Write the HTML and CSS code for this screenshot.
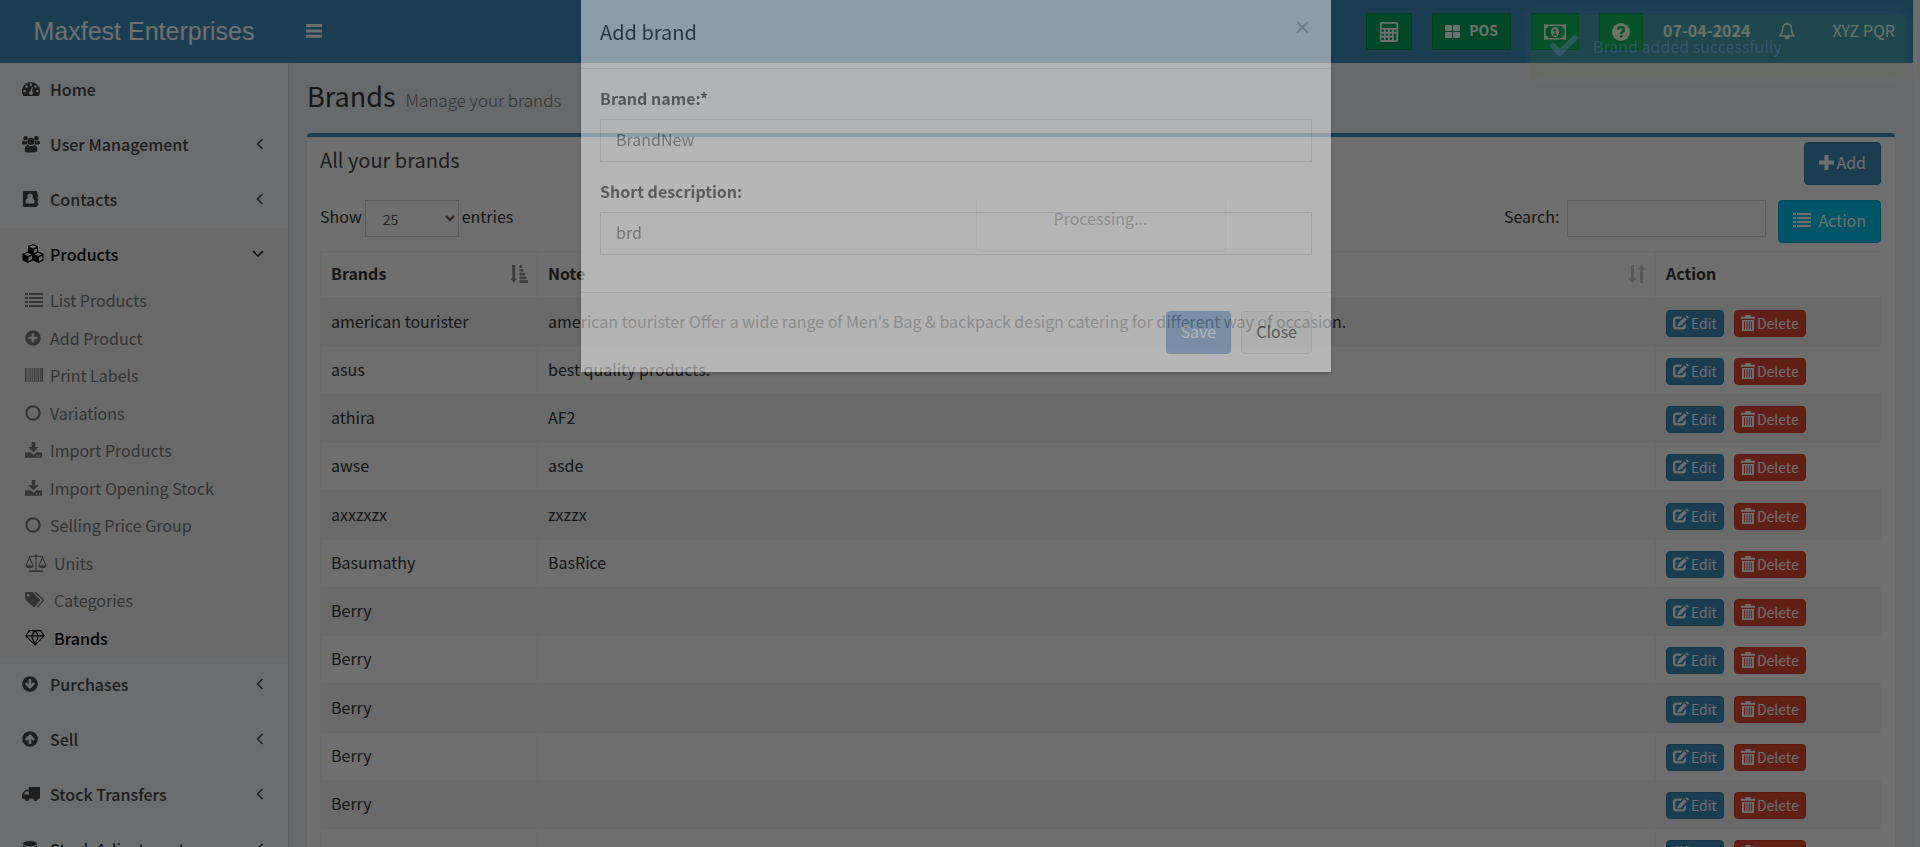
FILE: index.html
```html
<!DOCTYPE html>
<html lang="en">
<head>
<meta charset="utf-8">
<title>Brands - Maxfest Enterprises</title>
<link rel="stylesheet" href="styles.css">
</head>
<body>
<svg class="sprite" aria-hidden="true">
  <symbol id="bars" viewBox="0 0 16 14"><path d="M0 0h16v3H0zM0 5.4h16v3H0zM0 10.8h16v3H0z"/></symbol>
  <symbol id="dash" viewBox="0 0 18 18"><path fill-rule="evenodd" d="M9 2a9 9 0 0 1 9 9c0 1.800-.5 3.400-1.300 4.700-.2.200-.4.300-.7.300H2c-.3 0-.5-.1-.7-.3A9 9 0 0 1 9 2zM2.600 9.700a1.300 1.300 0 1 0 0 2.600 1.300 1.300 0 0 0 0-2.600zM4.500 5.200a1.300 1.300 0 1 0 0 2.600 1.300 1.300 0 0 0 0-2.600zM9 3.300a1.300 1.300 0 1 0 0 2.600 1.300 1.300 0 0 0 0-2.600zM13.500 5.200a1.300 1.300 0 1 0 0 2.600 1.300 1.300 0 0 0 0-2.600zM15.400 9.700a1.300 1.300 0 1 0 0 2.600 1.300 1.300 0 0 0 0-2.600zM9.700 6.900l-1 4a2 2 0 1 0 1.300.3l1-4z"/></symbol>
  <symbol id="users" viewBox="0 0 20 20"><circle cx="4" cy="3.500" r="2.500"/><circle cx="16" cy="3.500" r="2.500"/><circle cx="10" cy="7" r="4"/><path d="M2 6.500c1 .8 2.500.8 3.500.3 0 1.800.3 2.800 1 3.700H2C.7 10.500 0 9.800 0 8.700c0-1.500.8-2.500 2-2.200zM18 6.500c-1 .8-2.500.8-3.500.3 0 1.800-.3 2.800-1 3.700H18c1.300 0 2-.7 2-1.800 0-1.500-.8-2.500-2-2.200zM6.300 11c2 1.800 5.400 1.800 7.400 0 2.300.2 3.300 2.500 3.300 5.500 0 2-1.300 3-3 3H6c-1.700 0-3-1-3-3 0-3 1-5.300 3.300-5.500z"/></symbol>
  <symbol id="book" viewBox="0 0 18 20"><path fill-rule="evenodd" d="M2 1h12.500c.9 0 1.500.6 1.500 1.500V5h1v3h-1v1.500h1v3h-1V14h1v3h-1v.5c0 .9-.6 1.500-1.500 1.500H2c-1.200 0-2-.8-2-2V3c0-1.200.8-2 2-2zm6 3a3 3 0 0 0-2.400 4.900C3.900 9.400 3 11 3 13.200c0 1.100.7 1.800 1.700 1.800h6.600c1 0 1.700-.7 1.700-1.800 0-2.200-.9-3.800-2.600-4.300A3 3 0 0 0 8 4z"/></symbol>
  <symbol id="cubes" viewBox="0 0 22 20"><path fill-rule="evenodd" d="M11 0l5 2.100v5.300l5.500 2.300v6.500L16.300 19 11 16.600 5.700 19 .5 16.300V9.700L6 7.400V2.100zM11 1.300L7.300 2.900 11 4.500l3.700-1.600zM11.700 5.800v3.300l3.300-1.400V4.400zM5.700 8.700L2 10.300l3.700 1.700 3.700-1.700zM6.400 13.300v3.900l3.700-1.900v-3.600zM16.300 8.700l-3.700 1.600 3.700 1.700 3.700-1.700zM17 13.300v3.900l3.500-1.900v-3.600z"/></symbol>
  <symbol id="list" viewBox="0 0 18 14"><path d="M0 0h3v2H0zM4 0h14v2H4zM0 4h3v2H0zM4 4h14v2H4zM0 8h3v2H0zM4 8h14v2H4zM0 12h3v2H0zM4 12h14v2H4z"/></symbol>
  <symbol id="plusc" viewBox="0 0 16 16"><path fill-rule="evenodd" d="M8 .2a7.800 7.800 0 1 1 0 15.600A7.800 7.800 0 0 1 8 .2zM6.700 3.500v3.200H3.500v2.600h3.200v3.200h2.600V9.300h3.200V6.700H9.300V3.500z"/></symbol>
  <symbol id="barcode" viewBox="0 0 18 14"><path d="M0 0h1v14H0zM1.600 0h.7v14h-.7zM3.500 0h.8v14h-.8zM5 0h.8v14H5zM6.800 0h1v14h-1zM9 0h1.300v14H9zM11.200 0h.7v14h-.7zM12.800 0h1.400v14h-1.400zM15 0h.7v14H15zM16.500 0h1.500v14h-1.500z"/></symbol>
  <symbol id="circle" viewBox="0 0 16 16"><circle cx="8" cy="8" r="6.700" fill="none" stroke="currentColor" stroke-width="2.100"/></symbol>
  <symbol id="download" viewBox="0 0 17 16"><path d="M6.700 0h3.600v5h3.500L8.500 10.200 3.200 5h3.500z"/><path fill-rule="evenodd" d="M0 11c0-.4.300-.7.700-.7h4.800l3 2.600 3-2.600h4.800c.4 0 .7.300.7.700v4c0 .4-.3.700-.7.700H.7c-.4 0-.7-.3-.7-.7zm11.200 2.300v1.200h1.200v-1.200zm2.700 0v1.200h1.200v-1.200z"/></symbol>
  <symbol id="scale" viewBox="0 0 22 18"><path fill="none" stroke="currentColor" stroke-width="1.100" d="M4 2.200h14M11 1v15.500M1 11.500l3.500-8 3.500 8M14 11.500l3.500-8 3.500 8"/><circle cx="11" cy="2" r="1.600"/><path d="M.3 11.300h8.400c0 2-2 3-4.200 3s-4.200-1-4.200-3zM13.300 11.300h8.400c0 2-2 3-4.200 3s-4.200-1-4.200-3zM4 16.300h14V18H4z"/></symbol>
  <symbol id="tags" viewBox="0 0 20 16"><path fill-rule="evenodd" d="M0 1.300C0 .6.600 0 1.300 0h4.900c.7 0 1.600.4 2.100.9l6.400 6.400c.5.500.5 1.300 0 1.800l-5 5.600c-.5.500-1.300.5-1.800 0L.9 8.300C.4 7.800 0 6.900 0 6.200zm3.200.6a1.400 1.400 0 1 0 0 2.800 1.400 1.400 0 0 0 0-2.800z"/><path d="M8.600 0h1.600c.7 0 1.600.4 2.100.9l6.400 6.400c.5.500.5 1.300 0 1.800l-5.300 5.900c-.6.600-1.200.6-1.800.2l5.400-6.100c.5-.5.500-1.300 0-1.800z"/></symbol>
  <symbol id="diamond" viewBox="0 0 21 17"><path fill="none" stroke="currentColor" stroke-width="1.200" stroke-linejoin="round" d="M4.500.8h12L20 6.300 10.500 16 1 6.300zM1 6.300h19M10.500.8L6.800 6.300l3.700 9.500 3.700-9.500z"/></symbol>
  <symbol id="down" viewBox="0 0 16 16"><path fill-rule="evenodd" d="M8 .2a7.800 7.800 0 1 1 0 15.600A7.800 7.800 0 0 1 8 .2zM6.700 3v5.200L4.600 6.100 2.800 7.900 8 13.100l5.200-5.200-1.800-1.800-2.100 2.100V3z"/></symbol>
  <symbol id="up" viewBox="0 0 16 16"><path fill-rule="evenodd" d="M8 .2a7.800 7.800 0 1 1 0 15.600A7.800 7.800 0 0 1 8 .2zM6.700 13V7.800L4.600 9.900 2.800 8.100 8 2.900l5.200 5.200-1.800 1.800-2.100-2.100V13z"/></symbol>
  <symbol id="truck" viewBox="0 0 18 15"><path fill-rule="evenodd" d="M7.500.5h9.800c.4 0 .7.300.7.700v10.300c0 .5-.4.700-1 .7h-1a2.300 2.300 0 0 1-4.600 0H7.300a2.300 2.300 0 0 1-4.600 0H1c-.6 0-1-.2-1-.7V7.500l3.200-3.800c.3-.3.600-.4 1-.4h2.600V1.200c0-.4.300-.7.700-.7zM4.400 4.700L1.600 8h5.200V4.700z"/><circle cx="5" cy="12.600" r="1.600"/><circle cx="13.700" cy="12.600" r="1.600"/></symbol>
  <symbol id="db" viewBox="0 0 16 18"><ellipse cx="8" cy="3" rx="7.800" ry="3"/><path d="M.2 5c3 2.600 12.600 2.600 15.600 0v3c-2 3.500-13.600 3.500-15.600 0zM.2 10c3 2.600 12.600 2.600 15.600 0v4c-2 4-13.600 4-15.600 0z"/></symbol>
  <symbol id="left" viewBox="0 0 8 12"><path fill="none" stroke="currentColor" stroke-width="1.500" d="M6.500 1l-5 5 5 5"/></symbol>
  <symbol id="ang" viewBox="0 0 12 8"><path fill="none" stroke="currentColor" stroke-width="1.500" d="M1 1l5 5 5-5"/></symbol>
  <symbol id="calc" viewBox="0 0 20 22"><path fill-rule="evenodd" d="M2 0h16c1.100 0 2 .9 2 2v18c0 1.100-.9 2-2 2H2c-1.100 0-2-.9-2-2V2C0 .9.900 0 2 0zm0 2v4.500h16V2zM1.800 8.500v2.300h2.600V8.500zm4.500 0v2.300h2.600V8.500zm4.600 0v2.300h2.600V8.500zm4.500 0v2.300H18V8.500zM1.800 12.800v2.300h2.600v-2.300zm4.500 0v2.300h2.600v-2.300zm4.600 0v2.300h2.600v-2.300zM1.800 17.200v2.600h2.600v-2.600zm4.500 0v2.600h2.600v-2.600zm4.600 0v2.600h2.600v-2.600zm4.500-4.400v7H18v-7z"/></symbol>
  <symbol id="th" viewBox="0 0 15 13"><rect width="7" height="6" rx="1"/><rect x="8" width="7" height="6" rx="1"/><rect y="7" width="7" height="6" rx="1"/><rect x="8" y="7" width="7" height="6" rx="1"/></symbol>
  <symbol id="money" viewBox="0 0 22 15"><path fill-rule="evenodd" d="M0 0h22v15H0zM4 1.500A2.500 2.500 0 0 1 1.500 4v7A2.500 2.500 0 0 1 4 13.500h14a2.500 2.500 0 0 1 2.500-2.500V4A2.500 2.500 0 0 1 18 1.500zM11 2.500c2.200 0 4 2.200 4 5s-1.800 5-4 5-4-2.200-4-5 1.800-5 4-5zm-.6 2L8.800 6l.8.900.8-.6v3.200H9V11h4V9.500h-1.200v-5z"/></symbol>
  <symbol id="help" viewBox="0 0 18 18"><circle cx="9" cy="9" r="9"/><path fill="none" stroke="#00a65a" stroke-width="2.500" d="M5.800 6.700C6.300 5 7.500 4.300 9 4.300c1.700 0 3 .9 3 2.400 0 2-2.900 2-2.900 4.300"/><path fill="#00a65a" d="M7.800 12.200h2.600v2.400H7.800z"/></symbol>
  <symbol id="bell" viewBox="0 0 18 20"><path fill="none" stroke="currentColor" stroke-width="1.500" stroke-linejoin="round" d="M9 2.200c-3.200 0-4.800 2.400-4.800 5C4.200 11.500 2.800 13.600 1 15.500h16c-1.800-1.900-3.200-4-3.200-8.300 0-2.600-1.600-5-4.800-5z"/><path d="M8 .5h2v2H8zM6.500 16h5c0 2-1 3.300-2.500 3.300S6.500 18 6.500 16z"/></symbol>
  <symbol id="plus" viewBox="0 0 15 15"><path d="M5.500 0h4v5.500H15v4H9.500V15h-4V9.500H0v-4h5.500z"/></symbol>
  <symbol id="check" viewBox="0 0 30 23"><path d="M0 12l4-4 7 6.500L26 0l4 4-19 19z"/></symbol>
  <symbol id="edit" viewBox="0 0 16 15"><path d="M9.500 1H3.500A3.500 3.500 0 0 0 0 4.500v6A3.500 3.500 0 0 0 3.500 14h6a3.500 3.500 0 0 0 3.500-3.500V8l-2.300 2v.3c0 .9-.7 1.400-1.500 1.400H3.800c-.9 0-1.500-.7-1.500-1.500V4.800c0-.9.700-1.500 1.500-1.500h4zM11.500 1.700l2.400 2.300-6 6-3.600 1.200 1.200-3.600zM13.800 0L16 1.800l-1.300 1.300-2.200-2z"/></symbol>
  <symbol id="trash" viewBox="0 0 14 16"><path fill-rule="evenodd" d="M4.500 0h5v1.800H14v2H0v-2h4.500zM1 5h12v10c0 .6-.4 1-1 1H2c-.6 0-1-.4-1-1zm2 1.300v8h1v-8zm2.400 0v8h1v-8zm2.400 0v8h1v-8zm2.300 0v8h1v-8z"/></symbol>
  <symbol id="asc" viewBox="0 0 18 18"><path d="M2.200 0h3v13.500H7L3.700 18 .5 13.500h1.700zM9.500 0H12v2.800H9.500zM9.500 4h4v2.600h-4zM9.500 7.800H15v2.600H9.500zM9.500 11.600h7v2.600h-7zM9.500 15.300H18V18H9.500z"/></symbol>
  <symbol id="both" viewBox="0 0 18 18"><path d="M3 0h3v13h2.500l-4 5L.3 13H3zM12 18h3V5h2.700L13.500 0l-4 5H12z"/></symbol>
</svg>

<div class="app">
  <header class="topbar">
    <a class="brand" href="#">Maxfest Enterprises</a>
    <button class="toggle" aria-label="Toggle navigation"><svg class="w16"><use href="#bars"/></svg></button>
    <nav class="tools">
      <button class="tool" aria-label="Calculator"><svg class="w20"><use href="#calc"/></svg></button>
      <a class="tool pos" href="#"><svg class="w15"><use href="#th"/></svg><strong>POS</strong></a>
      <button class="tool" aria-label="Register profit"><svg class="w22"><use href="#money"/></svg></button>
      <button class="tool" aria-label="Help"><svg class="w18"><use href="#help"/></svg></button>
      <strong class="date">07-04-2024</strong>
      <a class="bell" href="#" aria-label="Notifications"><svg class="w18"><use href="#bell"/></svg></a>
      <a class="user" href="#">XYZ PQR</a>
    </nav>
  </header>

  <aside class="sidebar">
    <ul class="menu">
      <li><a href="#"><svg class="w18"><use href="#dash"/></svg>Home</a></li>
      <li><a href="#"><svg class="w18"><use href="#users"/></svg>User Management<svg class="arrow"><use href="#left"/></svg></a></li>
      <li><a href="#"><svg class="w18"><use href="#book"/></svg>Contacts<svg class="arrow"><use href="#left"/></svg></a></li>
      <li class="open"><a href="#"><svg class="w22"><use href="#cubes"/></svg>Products<svg class="arrow wide"><use href="#ang"/></svg></a>
        <ul class="sub">
          <li><a href="#"><svg class="w18"><use href="#list"/></svg>List Products</a></li>
          <li><a href="#"><svg class="w16"><use href="#plusc"/></svg>Add Product</a></li>
          <li><a href="#"><svg class="w18"><use href="#barcode"/></svg>Print Labels</a></li>
          <li><a href="#"><svg class="w16"><use href="#circle"/></svg>Variations</a></li>
          <li><a href="#"><svg class="w17"><use href="#download"/></svg>Import Products</a></li>
          <li><a href="#"><svg class="w17"><use href="#download"/></svg>Import Opening Stock</a></li>
          <li><a href="#"><svg class="w16"><use href="#circle"/></svg>Selling Price Group</a></li>
          <li class="far"><a href="#"><svg class="w22"><use href="#scale"/></svg>Units</a></li>
          <li class="far"><a href="#"><svg class="w20"><use href="#tags"/></svg>Categories</a></li>
          <li class="far current"><a href="#"><svg class="w20"><use href="#diamond"/></svg>Brands</a></li>
        </ul>
      </li>
      <li><a href="#"><svg class="w16"><use href="#down"/></svg>Purchases<svg class="arrow"><use href="#left"/></svg></a></li>
      <li><a href="#"><svg class="w16"><use href="#up"/></svg>Sell<svg class="arrow"><use href="#left"/></svg></a></li>
      <li><a href="#"><svg class="w18"><use href="#truck"/></svg>Stock Transfers<svg class="arrow"><use href="#left"/></svg></a></li>
      <li><a href="#"><svg class="w16"><use href="#db"/></svg>Stock Adjustment<svg class="arrow"><use href="#left"/></svg></a></li>
    </ul>
  </aside>

  <main class="content">
    <h1 class="page-title">Brands <small>Manage your brands</small></h1>
    <section class="box">
      <div class="box-head">
        <h2>All your brands</h2>
        <button class="btn primary"><svg class="w15"><use href="#plus"/></svg>Add</button>
      </div>
      <div class="toolbar">
        <label class="length">Show <select><option>25</option></select> entries</label>
        <label class="search">Search: <input type="search"></label>
        <button class="btn info"><svg class="w18"><use href="#list"/></svg>Action</button>
        <div class="processing">Processing...</div>
      </div>
      <table class="grid">
        <thead><tr><th class="c-brand">Brands<svg class="sort on"><use href="#asc"/></svg></th><th>Note<svg class="sort"><use href="#both"/></svg></th><th class="c-act">Action</th></tr></thead>
        <tbody>
          <tr><td>american tourister</td><td>american tourister Offer a wide range of Men's Bag &amp; backpack design catering for different way of occasion.</td><td><div class="acts"><button class="xs primary"><svg class="w16"><use href="#edit"/></svg>Edit</button><button class="xs danger"><svg class="w14"><use href="#trash"/></svg>Delete</button></div></td></tr>
          <tr><td>asus</td><td>best quality products.</td><td><div class="acts"><button class="xs primary"><svg class="w16"><use href="#edit"/></svg>Edit</button><button class="xs danger"><svg class="w14"><use href="#trash"/></svg>Delete</button></div></td></tr>
          <tr><td>athira</td><td>AF2</td><td><div class="acts"><button class="xs primary"><svg class="w16"><use href="#edit"/></svg>Edit</button><button class="xs danger"><svg class="w14"><use href="#trash"/></svg>Delete</button></div></td></tr>
          <tr><td>awse</td><td>asde</td><td><div class="acts"><button class="xs primary"><svg class="w16"><use href="#edit"/></svg>Edit</button><button class="xs danger"><svg class="w14"><use href="#trash"/></svg>Delete</button></div></td></tr>
          <tr><td>axxzxzx</td><td>zxzzx</td><td><div class="acts"><button class="xs primary"><svg class="w16"><use href="#edit"/></svg>Edit</button><button class="xs danger"><svg class="w14"><use href="#trash"/></svg>Delete</button></div></td></tr>
          <tr><td>Basumathy</td><td>BasRice</td><td><div class="acts"><button class="xs primary"><svg class="w16"><use href="#edit"/></svg>Edit</button><button class="xs danger"><svg class="w14"><use href="#trash"/></svg>Delete</button></div></td></tr>
          <tr><td>Berry</td><td></td><td><div class="acts"><button class="xs primary"><svg class="w16"><use href="#edit"/></svg>Edit</button><button class="xs danger"><svg class="w14"><use href="#trash"/></svg>Delete</button></div></td></tr>
          <tr><td>Berry</td><td></td><td><div class="acts"><button class="xs primary"><svg class="w16"><use href="#edit"/></svg>Edit</button><button class="xs danger"><svg class="w14"><use href="#trash"/></svg>Delete</button></div></td></tr>
          <tr><td>Berry</td><td></td><td><div class="acts"><button class="xs primary"><svg class="w16"><use href="#edit"/></svg>Edit</button><button class="xs danger"><svg class="w14"><use href="#trash"/></svg>Delete</button></div></td></tr>
          <tr><td>Berry</td><td></td><td><div class="acts"><button class="xs primary"><svg class="w16"><use href="#edit"/></svg>Edit</button><button class="xs danger"><svg class="w14"><use href="#trash"/></svg>Delete</button></div></td></tr>
          <tr><td>Berry</td><td></td><td><div class="acts"><button class="xs primary"><svg class="w16"><use href="#edit"/></svg>Edit</button><button class="xs danger"><svg class="w14"><use href="#trash"/></svg>Delete</button></div></td></tr>
          <tr><td></td><td></td><td><div class="acts"><button class="xs primary"><svg class="w16"><use href="#edit"/></svg>Edit</button><button class="xs danger"><svg class="w14"><use href="#trash"/></svg>Delete</button></div></td></tr>
        </tbody>
      </table>
    </section>
  </main>
</div>

<div class="backdrop"></div>

<div class="modal-wrap">
  <form class="modal">
    <div class="modal-head"><h2>Add brand</h2><button type="button" class="close" aria-label="Dismiss">×</button></div>
    <div class="modal-body">
      <div class="field"><label for="name">Brand name:*</label><input id="name" type="text" value="BrandNew"></div>
      <div class="field"><label for="desc">Short description:</label><input id="desc" type="text" value="brd"></div>
    </div>
    <div class="modal-foot"><button type="button" class="btn save">Save</button><button type="button" class="btn plain">Close</button></div>
  </form>
</div>

<div class="toast" role="status"><svg class="tick"><use href="#check"/></svg>Brand added successfully</div>
</body>
</html>
```
FILE: styles.css
```css
* { box-sizing: border-box; }
html { background: #f9f9f9; }
body {
  margin: 0;
  height: 100vh;
  overflow: hidden;
  padding-right: 7px;
  font: 16px/24px "Noto Sans CJK SC", "Noto Sans", sans-serif;
  color: #333;
}
button, input, select { font: inherit; color: inherit; }
button { cursor: pointer; }
a { color: inherit; text-decoration: none; }
h1, h2 { margin: 0; font-weight: 400; }
ul { margin: 0; padding: 0; list-style: none; }
svg { fill: currentColor; flex: none; }
.sprite { display: none; }
.w14 { width: 14px; height: 16px; }
.w15 { width: 15px; height: 15px; }
.w16 { width: 16px; height: 16px; }
.w17 { width: 17px; height: 16px; }
.w18 { width: 18px; height: 18px; }
.w20 { width: 20px; height: 20px; }
.w22 { width: 22px; height: 18px; }

.app {
  display: grid;
  grid-template: 63px auto / 289px minmax(0, 1fr);
  min-height: 100vh;
  background: #ecf0f5;
}

.topbar {
  grid-column: 1 / 3;
  display: flex;
  align-items: center;
  padding-right: 18px;
  background: #3c8dbc;
  color: #fff;
}
.brand {
  width: 288px;
  text-align: center;
  font: 25px/63px "Liberation Sans", Arial, sans-serif;
}
.toggle {
  display: flex;
  border: 0;
  padding: 16px 18px 18px;
  background: none;
}
.tools {
  display: flex;
  align-items: center;
  gap: 20px;
  margin-left: auto;
}
.tool {
  display: flex;
  align-items: center;
  gap: 9px;
  height: 37px;
  padding: 0 12px;
  border: 1px solid #008d4c;
  background: #00a65a;
  font-size: 14px;
}
.tool strong, .date, .user { padding-bottom: 3px; }
.bell { display: flex; margin: 0 16px 0 8px; padding-bottom: 2px; }

.sidebar {
  border-right: 1px solid #d2d6de;
  background: #f9fafc;
}
.menu > li > a {
  display: flex;
  align-items: center;
  height: 55px;
  padding: 0 24px 3px 22px;
  font-weight: 500;
  color: #444;
}
.menu > li > a > svg:first-child { margin-right: 10px; }
.menu > li > a > .w16:first-child { margin-right: 12px; }
.menu > li > a > .w22:first-child { margin-right: 6px; height: 20px; }
.menu .arrow { width: 8px; height: 12px; margin-left: auto; }
.menu .wide { width: 12px; height: 8px; }
.menu > .open { background: #f4f4f5; }
.menu > .open > a { color: #000; }
.sub {
  display: grid;
  grid-auto-rows: 1fr;
  height: 375px;
}
.sub a {
  display: flex;
  align-items: center;
  height: 100%;
  padding: 0 0 3px 25px;
  color: #777;
}
.sub svg { margin-right: 7px; }
.sub .w16 { margin-right: 9px; }
.sub .w17 { margin-right: 8px; }
.sub .far .w20 { margin-right: 9px; }
.sub .current a { color: #000; font-weight: 500; }

.content { padding: 0 18px; }
.page-title {
  height: 70px;
  padding-top: 13px;
  font-size: 27px;
  line-height: 40px;
}
.page-title small { font-size: 17px; font-weight: 300; color: #777; margin-left: 4px; }
.box {
  border-top: 4px solid #3c8dbc;
  border-radius: 4px;
  padding: 5px 14px 0 13px;
  background: #fff;
  box-shadow: 0 1px 1px rgba(0, 0, 0, .1);
}
.box-head { display: flex; justify-content: space-between; }
.box-head h2 { font-size: 20px; line-height: 35px; color: #444; }
.btn {
  display: flex;
  align-items: center;
  height: 43px;
  padding: 0 14px 3px;
  border: 1px solid transparent;
  border-radius: 4px;
}
.primary { background: #3c8dbc; border-color: #367fa9; color: #fff; }
.primary.btn { gap: 2px; }
.info { background: #00c0ef; border-color: #00acd6; color: #fff; gap: 7px; }
.danger { background: #dd4b39; border-color: #d73925; color: #fff; }
.toolbar {
  position: relative;
  display: flex;
  align-items: flex-start;
  gap: 12px;
  margin-top: 15px;
}
.toolbar label { display: flex; height: 37px; line-height: 33px; }
.length { gap: 3px; }
.search { gap: 8px; margin-left: auto; }
.toolbar select, .toolbar input {
  height: 37px;
  border: 1px solid #d2d6de;
  background: #fff;
}
.toolbar select { width: 94px; padding-left: 13px; font-size: 14px; color: #555; }
.toolbar input { width: 199px; }
.processing {
  position: absolute;
  left: 50%;
  top: 0;
  width: 250px;
  height: 51px;
  margin-left: -125px;
  border: solid #ddd;
  border-width: 0 1px 1px;
  border-radius: 0 0 4px 4px;
  background: #fff;
  box-shadow: 0 1px 1px rgba(0, 0, 0, .05);
  text-align: center;
  line-height: 36px;
}

.grid {
  width: 100%;
  margin-top: 8px;
  border-spacing: 0;
  border: 1px solid #f4f4f4;
  border-width: 1px 0 0 1px;
  table-layout: fixed;
}
.grid th, .grid td { padding: 0 10px 3px; border: 0 solid #f4f4f4; border-width: 0 0 1px; text-align: left; }
.grid th { position: relative; height: 46px; }
.grid th + th, .grid td + td { border-left-width: 1px; }
.grid td { height: 48px; }
.grid tr:nth-child(odd) td { background: #f4f4f4; }
.grid tr:nth-child(4n+1) td { height: 49px; }
.grid td { color: #333; white-space: nowrap; }
.c-brand { width: 216px; }
.c-act { width: 226px; }
.sort { position: absolute; right: 9px; top: 13px; width: 18px; height: 18px; opacity: .25; }
.sort.on { opacity: .55; }
.acts { display: flex; gap: 10px; padding-top: 5px; }
.xs {
  display: flex;
  align-items: center;
  gap: 2px;
  height: 27px;
  padding: 0 6px 1px;
  border: 1px solid #367fa9;
  border-radius: 4px;
  font-size: 14px;
}
.xs.danger { border-color: #d73925; }

.backdrop { position: fixed; inset: 0; background: rgba(0, 0, 0, .565); }
.modal-wrap {
  position: fixed;
  inset: 0 8px auto 0;
  display: flex;
  justify-content: center;
}
.modal {
  width: 750px;
  background: #fff;
  opacity: .5;
  box-shadow: 0 2px 4px rgba(0, 0, 0, .4);
}
.modal-head {
  display: flex;
  justify-content: space-between;
  height: 69px;
  padding: 0 19px;
  border-bottom: 1px solid #e5e5e5;
}
.modal-head h2 { font-size: 20px; line-height: 64px; }
.close { height: 54px; border: 0; padding: 0; background: none; font-size: 19px; font-weight: 700; line-height: 52px; opacity: .3; }
.modal-body { padding: 17px 19px 0; }
.field { padding-bottom: 17px; }
.field label { display: block; margin-bottom: 8px; line-height: 25px; font-weight: 700; color: #444; }
.field input {
  display: block;
  width: 100%;
  height: 43px;
  padding: 0 15px 3px;
  border: 1px solid #d2d6de;
  background: #fff;
  color: #777;
}
.modal-foot {
  display: flex;
  justify-content: flex-end;
  gap: 10px;
  margin-top: 20px;
  padding: 18px 19px;
  border-top: 1px solid #e5e5e5;
}
.save { background: #86b4e3; border-color: #82aee0; color: #fff; }
.plain { background: #f4f4f4; border-color: #ddd; color: #444; }

.toast {
  position: fixed;
  top: 15px;
  right: 15px;
  display: flex;
  align-items: center;
  gap: 14px;
  width: 375px;
  height: 64px;
  padding: 0 19px 3px;
  border-radius: 4px;
  background: rgba(66, 139, 55, .13);
  box-shadow: 0 0 15px rgba(153, 153, 153, .1);
  color: rgba(78, 108, 150, .45);
}
.tick { width: 30px; height: 23px; }
```
